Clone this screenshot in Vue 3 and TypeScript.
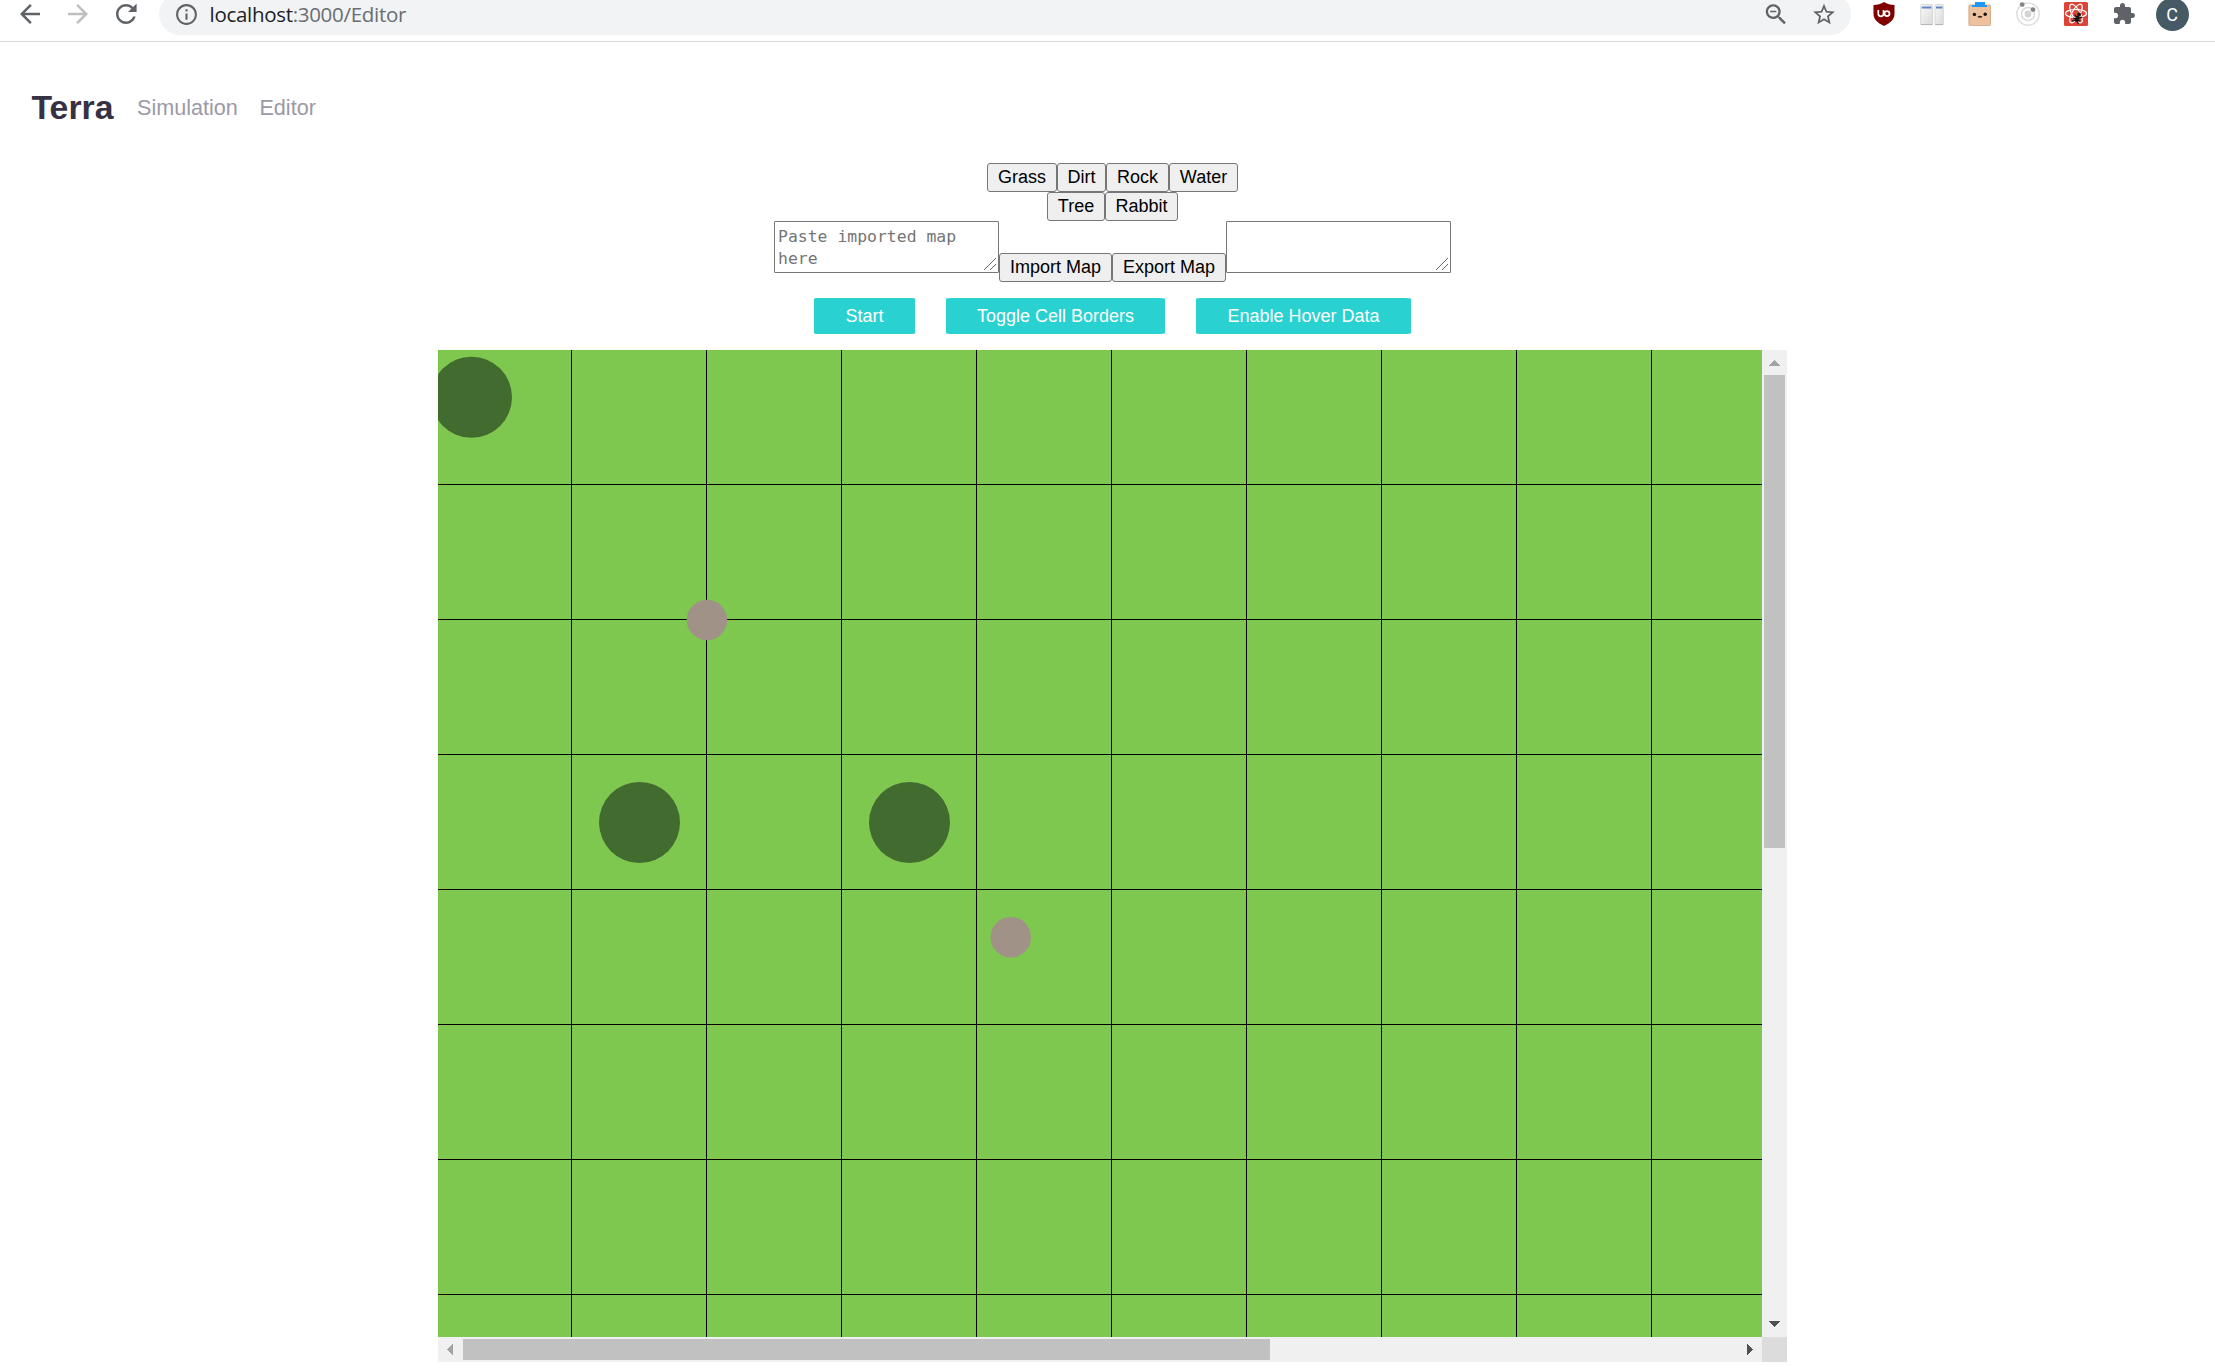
<script setup lang="ts">
interface Disc {
  kind: 'tree' | 'rabbit'
  x: number
  y: number
}

interface Control {
  name: string
  width: number
}

const CELL = 135
const columns = Array.from({ length: 9 }, (_, i) => 133 + i * CELL)
const rows = Array.from({ length: 7 }, (_, i) => 134 + i * CELL)

const discs: Disc[] = [
  { kind: 'tree', x: 33.5, y: 47.25 },
  { kind: 'rabbit', x: 269, y: 270 },
  { kind: 'tree', x: 201.5, y: 472.5 },
  { kind: 'tree', x: 471.5, y: 472.5 },
  { kind: 'rabbit', x: 572.75, y: 587.25 },
]

const tiles: Control[] = [
  { name: 'Grass', width: 70 },
  { name: 'Dirt', width: 49 },
  { name: 'Rock', width: 63 },
  { name: 'Water', width: 69 },
]
const objects: Control[] = [
  { name: 'Tree', width: 58 },
  { name: 'Rabbit', width: 73 },
]
const actions: Control[] = [
  { name: 'Start', width: 101 },
  { name: 'Toggle Cell Borders', width: 219 },
  { name: 'Enable Hover Data', width: 215 },
]
const petals: number[] = [0, 60, 120]
</script>

<template>
  <div class="window">
    <header class="toolbar">
      <div class="toolbar-row">
        <div class="nav-icons">
          <span class="cell"><svg width="30" height="30" viewBox="0 0 24 24" fill="#5f6368"><path d="M20 11H7.83l5.59-5.59L12 4l-8 8 8 8 1.41-1.41L7.83 13H20v-2z" /></svg></span>
          <span class="cell"><svg width="30" height="30" viewBox="0 0 24 24" fill="#bdbfc1"><path d="M12 4l-1.41 1.41L16.17 11H4v2h12.17l-5.58 5.59L12 20l8-8z" /></svg></span>
          <span class="cell"><svg width="30" height="30" viewBox="0 0 24 24" fill="#5f6368"><path d="M17.65 6.35C16.2 4.9 14.21 4 12 4c-4.42 0-7.99 3.58-7.99 8s3.57 8 7.99 8c3.73 0 6.84-2.55 7.73-6h-2.08c-.82 2.33-3.04 4-5.65 4-3.31 0-6-2.69-6-6s2.69-6 6-6c1.66 0 3.14.69 4.22 1.78L13.6 10.4h6.9V3.5l-2.850 2.850z" /></svg></span>
        </div>
        <div class="omnibox">
          <svg class="info" width="25" height="25" viewBox="0 0 24 24" fill="#5f6368"><path d="M11 17h2v-6h-2v6zm1-15C6.48 2 2 6.48 2 12s4.48 10 10 10 10-4.48 10-10S17.52 2 12 2zm0 18c-4.41 0-8-3.59-8-8s3.59-8 8-8 8 3.59 8 8-3.59 8-8 8zM11 9h2V7h-2v2z" /></svg>
          <span class="url"><b>localhost</b>:3000/Editor</span>
          <span class="cell"><svg width="27.5" height="27.5" viewBox="-.3 -.6 24 24" fill="#5f6368"><path d="M15.5 14h-.79l-.28-.27C15.41 12.59 16 11.11 16 9.5 16 5.91 13.09 3 9.5 3S3 5.91 3 9.5 5.91 16 9.5 16c1.61 0 3.09-.59 4.23-1.57l.27.28v.79l5 4.99L20.49 19l-4.99-5zm-6 0C7.01 14 5 11.99 5 9.5S7.01 5 9.5 5 14 7.01 14 9.5 11.99 14 9.5 14zM6.8 8.7h5.4v1.4H6.8z" /></svg></span>
          <span class="cell"><svg width="26" height="26" viewBox="0 0 24 23" fill="#5f6368"><path d="M22 9.24l-7.19-.62L12 2 9.19 8.63 2 9.24l5.46 4.73L5.82 21 12 17.27 18.18 21l-1.63-7.03L22 9.24zM12 15.4l-3.76 2.27 1-4.28-3.32-2.88 4.38-.38L12 6.1l1.71 4.04 4.38.38-3.32 2.88 1 4.28L12 15.4z" /></svg></span>
        </div>
        <div class="extensions">
          <span class="cell">
            <svg width="24" height="24" viewBox="0 0 24 24">
              <path d="M12 0C9 2 5.500 3 1.500 3v9c0 5.500 4.500 9 10.500 12 6-3 10.500-6.500 10.500-12V3C18.500 3 15 2 12 0z" fill="#800000" />
              <path d="M6.300 8v3.700a2.600 2.600 0 0 0 5.200 0V8" fill="none" stroke="#fff" stroke-width="1.700" />
              <circle cx="15" cy="11.600" r="2.500" fill="none" stroke="#fff" stroke-width="1.700" />
            </svg>
          </span>
          <span class="cell">
            <svg width="24" height="24" viewBox="0 0 24 24">
              <defs>
                <linearGradient id="pane" x1="0" y1="0" x2="1" y2="1">
                  <stop offset="0" stop-color="#fafafa" />
                  <stop offset="1" stop-color="#d9d9d9" />
                </linearGradient>
              </defs>
              <rect x=".7" y="2.500" width="12" height="20" rx="1" fill="url(#pane)" stroke="#cfcfcf" stroke-width=".8" />
              <rect x="15" y="2.500" width="8.300" height="20" rx="1" fill="url(#pane)" stroke="#cfcfcf" stroke-width=".8" />
              <path d="M1.800 5.500h9.600M16 5.500h6.400" stroke="#6486c0" stroke-width="2.200" />
              <path d="M.7 22.600h12M15 22.600h8.300" stroke="#b5b5b5" stroke-width="1" />
            </svg>
          </span>
          <span class="cell">
            <svg width="24" height="24" viewBox="0 0 24 24">
              <rect x=".9" y="3" width="21.600" height="20.600" rx="1" fill="#ecc19c" stroke="#c79f7c" stroke-width=".8" />
              <path d="M7 0h10v3h2v2H4V3h3z" fill="#2196f3" />
              <circle cx="6.400" cy="12.400" r="1.700" fill="#111" />
              <circle cx="17.200" cy="12.200" r="1.700" fill="#111" />
              <path d="M10 14.200q.9 1.700 1.900.2q1.100 1.500 2-.2" fill="none" stroke="#111" stroke-width="1.100" />
            </svg>
          </span>
          <span class="cell">
            <svg width="26" height="26" viewBox="-13 -13 26 26">
              <circle r="11.200" fill="none" stroke="#dcdcdc" stroke-width="1.300" />
              <circle r="6.500" fill="none" stroke="#dcdcdc" stroke-width="1.600" />
              <circle r="3.400" fill="#d4d4d4" />
              <circle cx="-5.800" cy="-9.400" r="2.400" fill="#858585" />
              <circle cx="5" cy="-4.400" r="2.400" fill="#858585" />
            </svg>
          </span>
          <span class="cell">
            <svg width="24" height="24" viewBox="0 0 24 24">
              <rect width="24" height="24" rx="1.500" fill="#dc4437" />
              <g fill="none" stroke="#fff" stroke-width="1.200">
                <ellipse v-for="angle in petals" :key="angle" cx="12" cy="11.500" rx="10.500" ry="4" :transform="`rotate(${angle} 12 11.5)`" />
              </g>
              <g transform="rotate(25 14.5 15)">
                <ellipse cx="14" cy="17.300" rx="2.200" ry="3.300" fill="#151515" />
                <circle cx="14" cy="12.500" r="1.900" fill="#151515" />
                <path d="M10 14.500l3 1.500M18 13.500l-3 2.500M10 18h8M10.500 21.500l2.500-2.500M17.500 21.500l-2.500-2.500" stroke="#151515" stroke-width="1.200" />
              </g>
            </svg>
          </span>
          <span class="cell"><svg width="24" height="24" viewBox="0 0 24 24" fill="#5f6368"><path d="M20.500 11H19V7c0-1.100-.9-2-2-2h-4V3.500C13 2.120 11.880 1 10.500 1S8 2.120 8 3.500V5H4c-1.100 0-1.990.9-1.990 2v3.800H3.500c1.490 0 2.700 1.210 2.700 2.700s-1.210 2.700-2.700 2.700H2V20c0 1.100.9 2 2 2h3.800v-1.500c0-1.490 1.210-2.700 2.700-2.700 1.490 0 2.700 1.210 2.700 2.700V22H17c1.100 0 2-.9 2-2v-4h1.500c1.380 0 2.500-1.120 2.500-2.500S21.880 11 20.500 11z" /></svg></span>
          <span class="cell"><span class="avatar">C</span></span>
        </div>
      </div>
    </header>

    <nav class="site-nav">
      <a class="brand">Terra</a>
      <a class="link">Simulation</a>
      <a class="link">Editor</a>
    </nav>

    <main class="editor">
      <div class="row">
        <button v-for="c in tiles" :key="c.name" class="plain" :style="{ width: `${c.width}px` }">{{ c.name }}</button>
      </div>
      <div class="row">
        <button v-for="c in objects" :key="c.name" class="plain" :style="{ width: `${c.width}px` }">{{ c.name }}</button>
      </div>
      <div class="row transfer">
        <div class="area">
          <span>Paste imported map here</span>
          <svg width="12" height="12" viewBox="0 0 12 12"><path d="M0 12L12 0M6 12L12 6" stroke="#666" fill="none" /></svg>
        </div>
        <button class="plain import">Import Map</button>
        <button class="plain export">Export Map</button>
        <div class="area">
          <svg width="12" height="12" viewBox="0 0 12 12"><path d="M0 12L12 0M6 12L12 6" stroke="#666" fill="none" /></svg>
        </div>
      </div>
      <div class="row actions">
        <button v-for="c in actions" :key="c.name" class="action" :style="{ width: `${c.width}px` }">{{ c.name }}</button>
      </div>

      <section class="board">
        <svg class="field" width="1324" height="987" viewBox="0 0 1324 987">
          <rect width="1324" height="987" fill="#7ec850" />
          <rect v-for="x in columns" :key="`c${x}`" :x="x" y="0" width="1" height="987" />
          <rect v-for="y in rows" :key="`r${y}`" x="0" :y="y" width="1324" height="1" />
          <circle
            v-for="(d, i) in discs"
            :key="i"
            :cx="d.x"
            :cy="d.y"
            :r="d.kind === 'tree' ? 40.5 : 20.25"
            :fill="d.kind === 'tree' ? '#426b2f' : '#a09287'"
          />
        </svg>
        <div class="bar vertical">
          <svg width="25" height="25" shape-rendering="crispEdges"><path d="M7 16L12.500 10L18 16z" fill="#a3a3a3" /></svg>
          <div class="thumb" />
          <svg width="25" height="25" shape-rendering="crispEdges"><path d="M7 9L12.500 15L18 9z" fill="#505050" /></svg>
        </div>
        <div class="bar horizontal">
          <svg width="25" height="25" shape-rendering="crispEdges"><path d="M15 7L9 12.500L15 18z" fill="#a3a3a3" /></svg>
          <div class="thumb" />
          <svg width="25" height="25" shape-rendering="crispEdges"><path d="M10 7L16 12.500L10 18z" fill="#505050" /></svg>
        </div>
        <div class="corner" />
      </section>
    </main>
  </div>
</template>

<style>
body {
  margin: 0;
  background: #fff;
}
</style>

<style scoped>
.window {
  width: 2215px;
  height: 1371px;
  overflow: hidden;
  font-family: "Liberation Sans", Arial, sans-serif;
}
svg {
  display: block;
  flex: none;
}
.toolbar {
  height: 41px;
  overflow: hidden;
  border-bottom: 1px solid #d8dadc;
}
.toolbar-row {
  display: flex;
  align-items: center;
  height: 56px;
  margin-top: -14px;
  padding-left: 6px;
}
.nav-icons {
  display: flex;
  padding-bottom: 1px;
  margin-right: 9px;
}
.extensions {
  display: flex;
  margin-left: 9px;
}
.cell {
  display: flex;
  flex: none;
  align-items: center;
  justify-content: center;
  width: 48px;
}
.omnibox {
  display: flex;
  align-items: center;
  box-sizing: border-box;
  width: 1692px;
  height: 42px;
  padding: 0 3px 0 15px;
  border-radius: 21px;
  background: #f1f3f4;
}
.url {
  flex: 1;
  margin-left: 10.5px;
  color: #6a6d71;
  font: 20.5px/28px "Open Sans", "Noto Sans", sans-serif;
  letter-spacing: -0.3px;
}
.url b {
  color: #202124;
  font-weight: 400;
}
.avatar {
  width: 33px;
  height: 33px;
  border-radius: 50%;
  background: #455a64;
  color: #fff;
  font: 18px/33px Roboto, sans-serif;
  text-align: center;
}
.site-nav {
  display: flex;
  align-items: center;
  gap: 21.6px;
  box-sizing: border-box;
  height: 121px;
  padding: 10px 0 0 31.5px;
}
.brand {
  margin-right: 2px;
  color: #363143;
  font-size: 33.75px;
  font-weight: 700;
}
.link {
  color: #9c99a6;
  font-size: 21.6px;
}
.editor {
  display: flex;
  flex-direction: column;
  align-items: center;
  margin-left: 10px;
}
.row {
  display: flex;
}
.plain {
  box-sizing: border-box;
  height: 29px;
  margin: 0;
  padding: 0;
  border: 1px solid #767676;
  border-radius: 3px;
  background: #efefef;
  color: #000;
  font: 18px/25px "Liberation Sans", Arial, sans-serif;
  white-space: nowrap;
}
.import {
  width: 113px;
}
.export {
  width: 114px;
}
.transfer {
  height: 61px;
  align-items: flex-end;
}
.area {
  position: relative;
  align-self: flex-start;
  box-sizing: border-box;
  width: 225px;
  height: 52px;
  padding: 4px 20px 0 3px;
  border: 1px solid #767676;
  border-radius: 1px;
  background: #fff;
  color: #757575;
  font: 16.44px/22px "DejaVu Sans Mono", monospace;
}
.area svg {
  position: absolute;
  right: 2px;
  bottom: 2px;
}
.actions {
  gap: 31px;
  margin: 16px 0;
}
.action {
  height: 36px;
  margin: 0;
  padding: 0 0 1px;
  border: 0;
  border-radius: 3%;
  background: #2ad1d1;
  color: #fff;
  font: 18px/34px "Liberation Sans", Arial, sans-serif;
  white-space: nowrap;
}
.board {
  display: grid;
  grid-template: 987px 25px / 1324px 25px;
}
.bar {
  display: flex;
  justify-content: space-between;
  background: #f0f0f0;
}
.vertical {
  flex-direction: column;
}
.thumb {
  background: #c1c1c1;
}
.vertical .thumb {
  height: 473px;
  margin: 0 2px auto;
}
.horizontal .thumb {
  width: 807px;
  margin: 2px auto 2px 0;
}
.corner {
  background: #dcdcdc;
}
</style>
